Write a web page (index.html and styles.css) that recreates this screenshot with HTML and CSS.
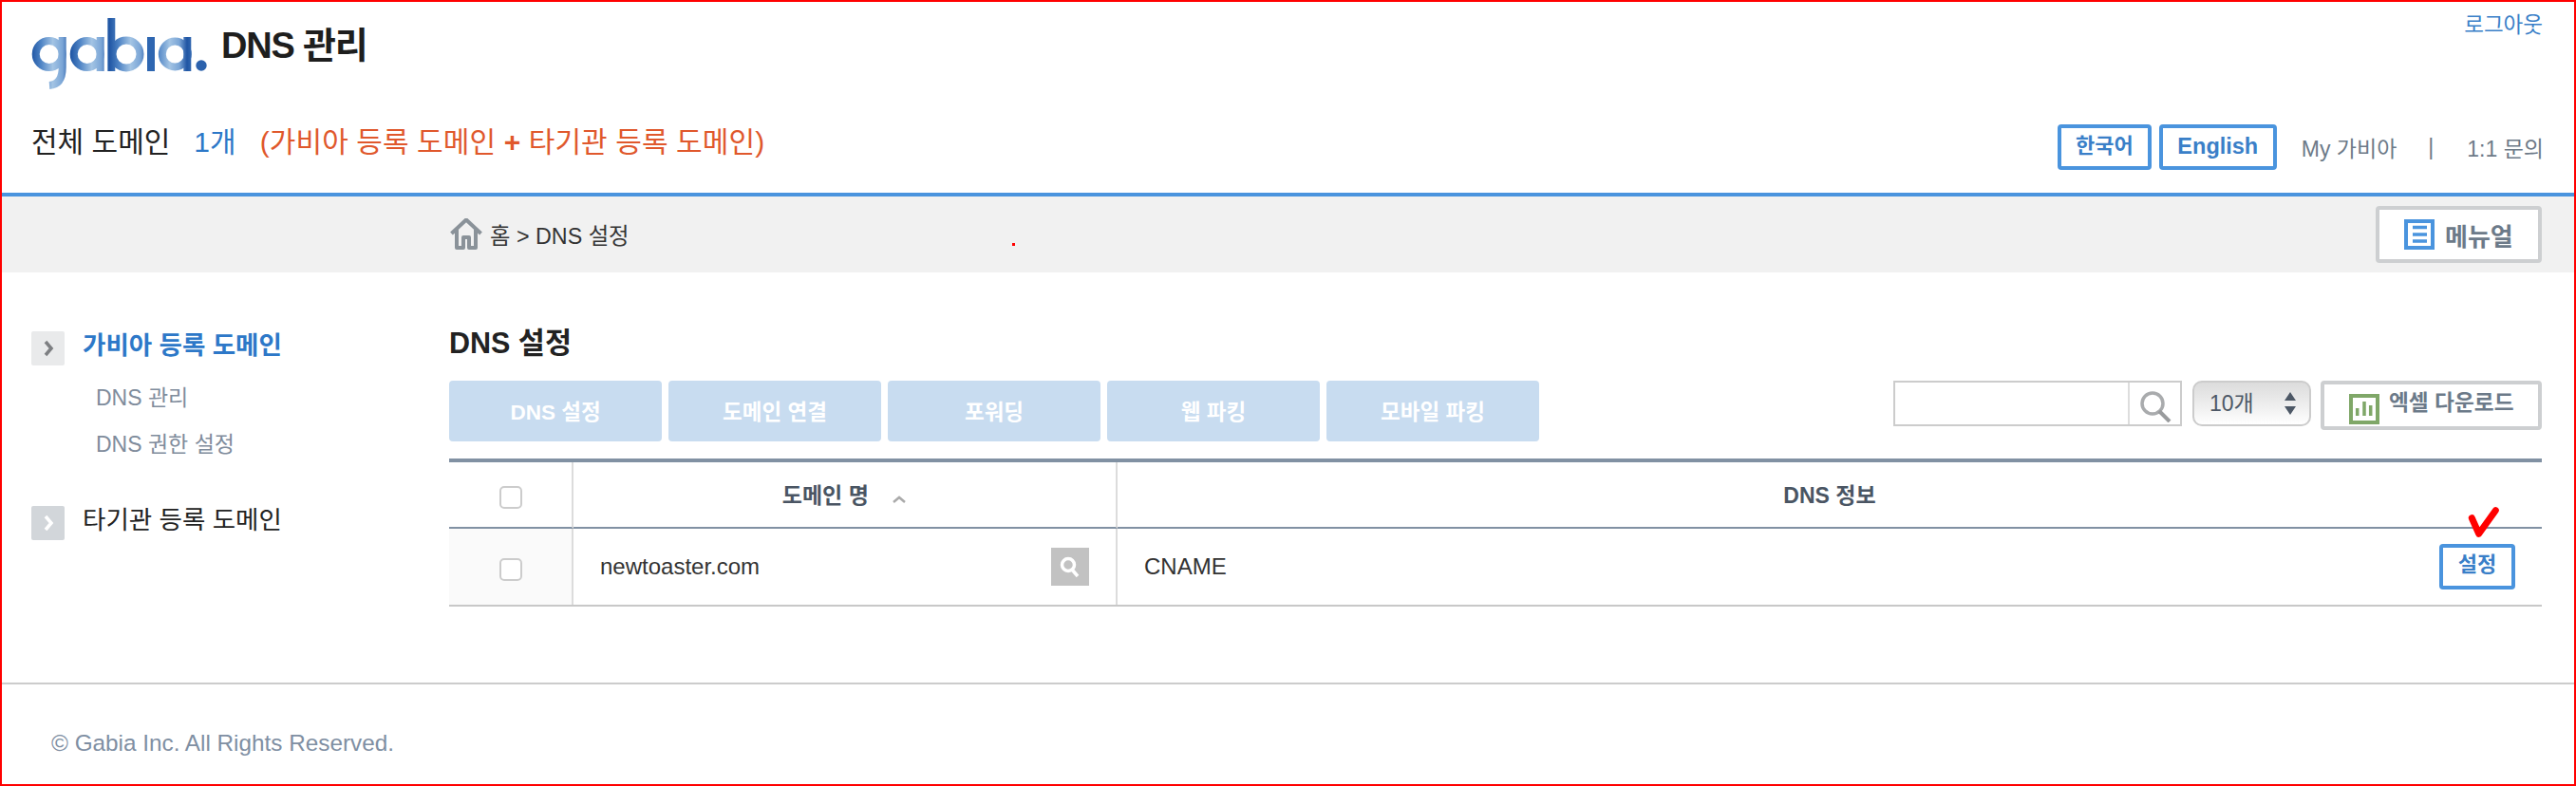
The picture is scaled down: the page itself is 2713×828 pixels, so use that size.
FILE: index.html
```html
<!DOCTYPE html>
<html lang="ko">
<head>
    <meta charset="UTF-8">
    <title>DNS 관리</title>
    <link rel="stylesheet" href="styles.css">
</head>
<body>
<div class="page">
    <!-- Header -->
    <header class="top">
        <div class="top-row">
            <svg class="logo" width="190" height="76" viewBox="0 0 190 76" role="img" aria-label="gabia">
                <defs>
                    <linearGradient id="logoBlue" gradientUnits="userSpaceOnUse" x1="0" y1="0" x2="41" y2="0" spreadMethod="repeat">
                        <stop offset="0" stop-color="#1f55a3"/>
                        <stop offset="0.25" stop-color="#4f84c5"/>
                        <stop offset="0.55" stop-color="#a3c4e4"/>
                        <stop offset="0.8" stop-color="#7aa5d6"/>
                        <stop offset="1" stop-color="#1f55a3"/>
                    </linearGradient>
                    <filter id="soft"><feGaussianBlur stdDeviation="0.6"/></filter>
                </defs>
                <g fill="none" stroke="url(#logoBlue)" stroke-width="8" filter="url(#soft)">
                    <circle cx="18.700" cy="38" r="14"/>
                    <path d="M32.700 20V52Q32.700 70 19 71"/>
                    <circle cx="58.700" cy="38" r="14"/>
                    <path d="M72.700 20V56"/>
                    <circle cx="100" cy="38" r="14.500"/>
                    <path d="M84.300 0V56"/>
                    <path d="M126 20V56" stroke="#2f66b1"/>
                    <circle cx="151.300" cy="38" r="13.500"/>
                    <path d="M164.300 20V56"/>
                </g>
                <circle cx="179" cy="50" r="5.700" fill="#2c62ad"/>
            </svg>
            <h1 class="site-title">DNS 관리</h1>
            <a class="logout" href="#">로그아웃</a>
        </div>
        <div class="top-row second">
            <p class="domain-count">
                <span>전체 도메인</span>
                <span class="count-num">1개</span>
                <span class="count-note">(가비아 등록 도메인 <b>+</b> 타기관 등록 도메인)</span>
            </p>
            <div class="top-links">
                <a class="lang-btn lang-ko" href="#">한국어</a>
                <a class="lang-btn lang-en" href="#">English</a>
                <a class="plain-link my" href="#">My 가비아</a>
                <span class="plain-link sep">|</span>
                <a class="plain-link" href="#">1:1 문의</a>
            </div>
        </div>
    </header>

    <!-- Breadcrumb -->
    <div class="crumbs">
        <svg class="home-icon" width="34" height="34" viewBox="0 0 34 34">
            <path d="M1.500 16L17 1.500L32.500 16M7 12V31H14V20H20V31H27V12" fill="none" stroke="#8a9299" stroke-width="4" stroke-linejoin="round"/>
        </svg>
        <span class="crumb-text">홈 &gt; DNS 설정</span>
        <i class="red-dot"></i>
        <a class="outline-btn manual-btn" href="#">
            <svg width="32" height="32" viewBox="0 0 32 32">
                <rect width="32" height="32" fill="#4a94de"/>
                <rect x="4" y="4" width="24" height="24" fill="#fff"/>
                <path d="M9 8.500H24M9 16H24M9 23H24" stroke="#4a94de" stroke-width="3.500"/>
            </svg>
            메뉴얼
        </a>
    </div>

    <div class="main">
        <!-- Side menu -->
        <nav class="side">
            <div class="side-head active">
                <span class="chev"><svg width="12" height="18" viewBox="0 0 12 18"><path d="M3 2L9 9L3 16" fill="none" stroke="#7d7f82" stroke-width="3.500"/></svg></span>
                가비아 등록 도메인
            </div>
            <a class="side-link first" href="#">DNS 관리</a>
            <a class="side-link" href="#">DNS 권한 설정</a>
            <div class="side-head other">
                <span class="chev"><svg width="12" height="18" viewBox="0 0 12 18"><path d="M3 2L9 9L3 16" fill="none" stroke="#fff" stroke-width="3.500"/></svg></span>
                타기관 등록 도메인
            </div>
        </nav>

        <section class="content">
            <h2 class="page-title">DNS 설정</h2>
            <div class="toolbar">
                <button class="tab" type="button">DNS 설정</button>
                <button class="tab" type="button">도메인 연결</button>
                <button class="tab" type="button">포워딩</button>
                <button class="tab" type="button">웹 파킹</button>
                <button class="tab" type="button">모바일 파킹</button>
                <div class="search-box">
                    <input type="text">
                    <span class="search-icon">
                        <svg width="34" height="34" viewBox="0 0 34 34">
                            <circle cx="14" cy="14" r="11" fill="none" stroke="#a9abad" stroke-width="3.500"/>
                            <path d="M21 22L32 33" stroke="#999b9d" stroke-width="4"/>
                        </svg>
                    </span>
                </div>
                <div class="page-size">
                    <span class="size-text">10개</span>
                    <svg width="12" height="24" viewBox="0 0 12 24"><path d="M6 0L12 9H0ZM0 15H12L6 24Z" fill="#4d5866"/></svg>
                </div>
                <a class="outline-btn excel-btn" href="#">
                    <svg width="32" height="32" viewBox="0 0 32 32">
                        <rect width="32" height="32" fill="#7fa768"/>
                        <rect x="4" y="4" width="24" height="24" fill="#fff"/>
                        <path d="M8.700 23V15M16 23V8M22.700 23V12" stroke="#7fa768" stroke-width="3.500"/>
                    </svg>
                    <span class="excel-text">엑셀 다운로드</span>
                </a>
            </div>

            <table class="dns-table">
                <thead>
                    <tr>
                        <th class="col-check"><span class="check"></span></th>
                        <th class="col-name">도메인 명 <svg class="sort" width="16" height="8" viewBox="0 0 16 8"><path d="M2 7L8 2L14 7" fill="none" stroke="#aaa" stroke-width="2.500"/></svg></th>
                        <th>DNS 정보</th>
                    </tr>
                </thead>
                <tbody>
                    <tr>
                        <td class="col-check shaded"><span class="check"></span></td>
                        <td class="col-name">
                            <div class="name-cell">
                                newtoaster.com
                                <span class="mini-search">
                                    <svg width="24" height="24" viewBox="0 0 24 24">
                                        <circle cx="10" cy="10" r="6.500" fill="none" stroke="#fff" stroke-width="3.500"/>
                                        <path d="M14 15L20 22" stroke="#fff" stroke-width="3.500"/>
                                    </svg>
                                </span>
                            </div>
                        </td>
                        <td>
                            <div class="info-cell">
                                CNAME
                                <span class="set-wrap">
                                    <svg class="red-check" width="34" height="36" viewBox="0 0 34 36">
                                        <path d="M4.300 13.700L11.700 30.300L29.300 5.700" fill="none" stroke="#ff0000" stroke-width="7" stroke-linecap="round" stroke-linejoin="round"/>
                                    </svg>
                                    <a class="set-btn" href="#">설정</a>
                                </span>
                            </div>
                        </td>
                    </tr>
                </tbody>
            </table>
        </section>
    </div>

    <footer class="foot">© Gabia Inc. All Rights Reserved.</footer>
</div>
</body>
</html>
```

FILE: styles.css
```css
* {
    box-sizing: border-box;
}

body {
    margin: 0;
    background: #fff;
    font-family: "Liberation Sans", "Noto Sans CJK KR", sans-serif;
    color: #222;
}

a {
    text-decoration: none;
    color: inherit;
}

.page {
    display: flex;
    flex-direction: column;
    height: 828px;
    border: 2px solid #ff0000;
    overflow: hidden;
}

/* Header */
.top {
    height: 205px;
    padding: 0 32px 0 31px;
    border-bottom: 4px solid #4a94de;
}

.top-row {
    display: flex;
    align-items: flex-start;
    height: 100px;
}

.logo {
    margin-top: 17px;
}

.site-title {
    margin: 21px 0 0 10px;
    font-size: 38px;
    line-height: 50px;
    letter-spacing: -1.2px;
    color: #1e1e1e;
}

.logout {
    margin: 10px 1px 0 auto;
    font-size: 22.5px;
    line-height: 30px;
    color: #3a7fc8;
}

.domain-count {
    display: flex;
    margin: 28px 0 0;
    font-size: 30px;
    line-height: 40px;
    color: #222;
}

.count-num {
    margin-left: 25px;
    color: #2d78c8;
}

.count-note {
    margin-left: 25px;
    letter-spacing: 0.1px;
    color: #e0582c;
}

.top-links {
    display: flex;
    align-items: center;
    height: 48px;
    margin: 29px 0 0 auto;
}

.lang-btn {
    height: 48px;
    border: 4px solid #4a94de;
    border-radius: 4px;
    font-size: 22px;
    font-weight: bold;
    line-height: 38px;
    text-align: center;
    color: #3a7fc8;
}

.lang-ko {
    width: 99px;
}

.lang-en {
    width: 124px;
    margin-left: 8px;
    font-size: 23.5px;
}

.plain-link {
    font-size: 23px;
    color: #6d7a88;
}

.my {
    margin-left: 26px;
}

.sep {
    margin: 0 35px 0 33px;
}

/* Breadcrumb */
.crumbs {
    position: relative;
    display: flex;
    align-items: center;
    flex: none;
    height: 80px;
    padding: 0 34px 0 472px;
    background: #f1f1f1;
}

.crumb-text {
    margin-left: 8px;
    font-size: 23.3px;
    color: #333;
}

.red-dot {
    position: absolute;
    left: 1064px;
    top: 49px;
    width: 3px;
    height: 3px;
    background: #ff0000;
}

.outline-btn {
    display: flex;
    align-items: center;
    border: 4px solid #cdcfd1;
    border-radius: 4px;
    background: #fff;
    font-weight: bold;
    color: #6c7a89;
}

.manual-btn {
    gap: 11px;
    width: 175px;
    height: 60px;
    margin-left: auto;
    padding-left: 26px;
    font-size: 26px;
}

/* Layout */
.main {
    display: flex;
    flex: 1;
    border-bottom: 2px solid #ccc;
}

.side {
    flex: none;
    width: 471px;
    padding: 62px 0 0 31px;
}

.side-head {
    display: flex;
    align-items: flex-start;
    gap: 19px;
    height: 36px;
    font-size: 26.5px;
    line-height: 31px;
}

.side-head.active {
    font-weight: bold;
    color: #2d78c8;
}

.chev {
    display: flex;
    align-items: center;
    justify-content: center;
    width: 35px;
    height: 36px;
    border-radius: 2px;
    background: #e9eaeb;
}

.other {
    margin-top: 48px;
    color: #222;
}

.other .chev {
    background: #d2d6da;
}

.side-link {
    display: block;
    margin: 15px 0 0 68px;
    font-size: 23px;
    line-height: 34px;
    color: #7f8c9c;
}

.side-link.first {
    margin-top: 17px;
}

/* Content */
.content {
    flex: 1;
    padding-right: 34px;
}

.page-title {
    margin: 54px 0 0;
    font-size: 30.5px;
    line-height: 40px;
    color: #222;
}

.toolbar {
    display: flex;
    align-items: flex-start;
    gap: 7px;
    margin-top: 20px;
}

.tab {
    width: 224px;
    height: 64px;
    padding: 0 0 2px;
    border: none;
    border-radius: 4px;
    background: #c8dcf0;
    font-family: inherit;
    font-size: 22.5px;
    font-weight: bold;
    color: #fff;
}

.search-box {
    display: flex;
    width: 304px;
    height: 48px;
    margin-left: auto;
    border: 2px solid #ccc;
}

.search-box input {
    width: 247px;
    border: none;
    border-right: 2px solid #ddd;
}

.search-icon {
    padding: 8px 0 0 10px;
}

.page-size {
    display: flex;
    align-items: center;
    justify-content: space-between;
    width: 125px;
    height: 48px;
    margin-left: 4px;
    padding: 0 14px 0 16px;
    border: 2px solid #ccc;
    border-radius: 10px;
    background: linear-gradient(#dcdcdc, #f0f0f0 60%, #fff);
    font-size: 23px;
    color: #4d5866;
}

.size-text {
    margin-bottom: 4px;
}

.excel-btn {
    align-items: flex-start;
    gap: 10px;
    width: 233px;
    height: 52px;
    margin-left: 3px;
    padding: 10px 0 0 26px;
    font-size: 22.7px;
}

.excel-text {
    margin-top: -4px;
    line-height: 26px;
}

/* Table */
.dns-table {
    width: 100%;
    margin-top: 18px;
    border-top: 4px solid #8191a3;
    border-bottom: 2px solid #c8c8c8;
    border-collapse: separate;
    border-spacing: 0;
    table-layout: fixed;
}

.dns-table th {
    height: 70px;
    padding: 0 0 3px;
    border-bottom: 2px solid #8191a3;
    font-size: 23px;
    color: #4a5563;
}

.dns-table td {
    height: 80px;
    padding: 0;
    font-size: 24px;
    color: #333;
}

.col-check {
    width: 131px;
    border-right: 2px solid #dcdcdc;
    text-align: center;
}

.col-name {
    width: 573px;
    border-right: 2px solid #dcdcdc;
}

.shaded {
    background: #fafafa;
}

.check {
    display: inline-block;
    width: 24px;
    height: 24px;
    margin-top: 8px;
    border: 2px solid #ccc;
    border-radius: 5px;
    background: #fff;
    vertical-align: middle;
}

.dns-table td .check {
    margin-top: 4px;
}

.sort {
    margin-left: 18px;
}

.name-cell {
    display: flex;
    align-items: center;
    justify-content: space-between;
    padding: 0 28px;
}

.mini-search {
    display: flex;
    align-items: center;
    justify-content: center;
    width: 40px;
    height: 40px;
    background: #c2c2c2;
}

.info-cell {
    display: flex;
    align-items: center;
    justify-content: space-between;
    padding: 0 28px;
}

.set-wrap {
    position: relative;
}

.set-btn {
    display: block;
    width: 80px;
    height: 48px;
    border: 4px solid #4a94de;
    border-radius: 4px;
    font-size: 22px;
    font-weight: bold;
    line-height: 36px;
    text-align: center;
    color: #3a7fc8;
}

.red-check {
    position: absolute;
    left: 30px;
    top: -41px;
}

/* Footer */
.foot {
    flex: none;
    height: 105px;
    padding: 48px 0 0 52px;
    font-size: 24.3px;
    color: #7f8fa3;
}
```
